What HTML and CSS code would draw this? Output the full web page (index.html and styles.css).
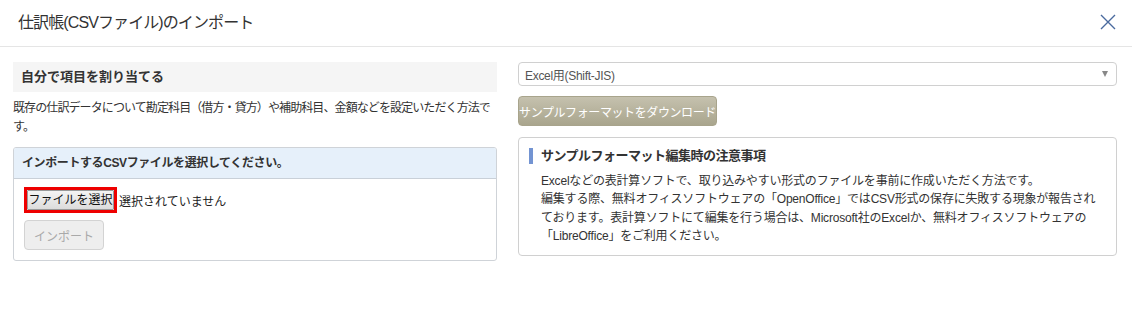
FILE: index.html
```html
<!DOCTYPE html>
<html lang="ja">
<head>
<meta charset="utf-8">
<title>仕訳帳(CSVファイル)のインポート</title>
<link rel="stylesheet" href="styles.css">
</head>
<body>
<div class="modal">
  <header class="modal-header">
    <h1 class="modal-title">仕訳帳(CSVファイル)のインポート</h1>
    <button class="close" aria-label="閉じる">
      <svg width="16" height="16" viewBox="0 0 16 16"><path d="M1 1 L15 15 M15 1 L1 15" stroke="#4a6a9e" stroke-width="1.4" fill="none"/></svg>
    </button>
  </header>
  <div class="modal-body">
    <section class="col-left">
      <h2 class="section-title">自分で項目を割り当てる</h2>
      <p class="desc">既存の仕訳データについて勘定科目（借方・貸方）や補助科目、金額などを設定いただく方法です。</p>
      <div class="panel">
        <div class="panel-head">インポートするCSVファイルを選択してください。</div>
        <div class="panel-body">
          <div class="file-row">
            <span class="highlight"><button class="file-btn">ファイルを選択</button></span>
            <span class="file-status">選択されていません</span>
          </div>
          <button class="import-btn" disabled>インポート</button>
        </div>
      </div>
    </section>
    <section class="col-right">
      <div class="select">
        <span>Excel用(Shift-JIS)</span>
        <span class="caret"></span>
      </div>
      <button class="download-btn">サンプルフォーマットをダウンロード</button>
      <div class="notes">
        <h3 class="notes-title">サンプルフォーマット編集時の注意事項</h3>
        <p class="notes-text">Excelなどの表計算ソフトで、取り込みやすい形式のファイルを事前に作成いただく方法です。<br>編集する際、無料オフィスソフトウェアの「OpenOffice」ではCSV形式の保存に失敗する現象が報告されております。表計算ソフトにて編集を行う場合は、Microsoft社のExcelか、無料オフィスソフトウェアの「LibreOffice」をご利用ください。</p>
      </div>
    </section>
  </div>
</div>
</body>
</html>
```

FILE: styles.css
```css
* { box-sizing: border-box; }
html, body { margin: 0; padding: 0; background: #fff; }
body {
  font-family: "Liberation Sans", "Noto Sans CJK JP", sans-serif;
  color: #333;
  font-size: 12px;
}
.modal { width: 1132px; }
.modal-header {
  height: 47px;
  border-bottom: 1px solid #e5e5e5;
  display: flex;
  align-items: center;
  justify-content: space-between;
  padding: 0 16px 5px 18px;
}
.modal-title {
  margin: 0;
  font-size: 16px;
  font-weight: normal;
  color: #333;
  letter-spacing: -0.9px;
}
.close {
  border: 0;
  background: none;
  padding: 0;
  width: 16px;
  height: 16px;
  display: flex;
  margin-top: 2px;
}
.modal-body {
  display: grid;
  grid-template-columns: 484px 599px;
  column-gap: 21px;
  padding: 15px 0 0 13px;
  align-items: start;
}
.section-title {
  margin: 0;
  background: #f5f5f5;
  height: 30px;
  line-height: 30px;
  padding-left: 8px;
  font-size: 13px;
  font-weight: bold;
  color: #333;
}
.desc {
  margin: 7px 0 10px;
  line-height: 19px;
  letter-spacing: -0.9px;
}
.panel {
  border: 1px solid #cfd3d8;
  border-radius: 3px;
  overflow: hidden;
}
.panel-head {
  background: #e6f0fa;
  border-bottom: 1px solid #c9d0d8;
  height: 31px;
  line-height: 30px;
  padding-left: 8px;
  font-weight: bold;
  font-size: 12px;
  letter-spacing: -0.4px;
}
.panel-body {
  padding: 8px 10px 10px;
  display: flex;
  flex-direction: column;
  align-items: flex-start;
  gap: 7px;
}
.file-row {
  display: flex;
  align-items: center;
}
.highlight {
  border: 3px solid #ee0000;
  display: flex;
  padding: 0;
}
.file-btn {
  font-family: inherit;
  font-size: 12px;
  color: #111;
  height: 20px;
  width: 87px;
  padding: 0;
  line-height: 18px;
  background: linear-gradient(#f4f4f4, #dcdcdc);
  border: 1px solid #999;
  border-radius: 1px;
}
.file-status {
  margin-left: 2px;
  font-size: 12px;
  color: #222;
}
.import-btn {
  font-family: inherit;
  font-size: 12px;
  color: #a9a9a9;
  width: 80px;
  height: 30px;
  background: #eee;
  border: 1px solid #d3d3d3;
  border-radius: 4px;
  padding: 0;
}
.col-right {
  display: flex;
  flex-direction: column;
  align-items: flex-start;
}
.select {
  width: 100%;
  height: 24px;
  border: 1px solid #d0d0d0;
  border-radius: 4px;
  display: flex;
  align-items: center;
  justify-content: space-between;
  padding: 0 8px 0 6px;
  color: #555;
  font-size: 12px;
  letter-spacing: -0.3px;
}
.caret {
  width: 0; height: 0;
  border-left: 3.5px solid transparent;
  border-right: 3.5px solid transparent;
  border-top: 6px solid #888;
}
.download-btn {
  margin-top: 10px;
  width: 199px;
  height: 30px;
  border: 1px solid #a8a48c;
  border-radius: 4px;
  background: linear-gradient(#c5c1ae, #a9a58d);
  color: #fff;
  font-family: inherit;
  font-size: 12px;
  padding: 0;
  letter-spacing: -0.4px;
}
.notes {
  margin-top: 11px;
  width: 100%;
  border: 1px solid #d0d0d0;
  border-radius: 4px;
  padding: 10px 10px 10px 10px;
}
.notes-title {
  margin: 0;
  font-size: 13px;
  font-weight: bold;
  color: #333;
  border-left: 4px solid #7394d2;
  padding-left: 8px;
  line-height: 16px;
  letter-spacing: -0.5px;
}
.notes-text {
  margin: 8px 0 0 12px;
  line-height: 18.3px;
  font-size: 12px;
  color: #333;
  letter-spacing: -0.2px;
}
```
